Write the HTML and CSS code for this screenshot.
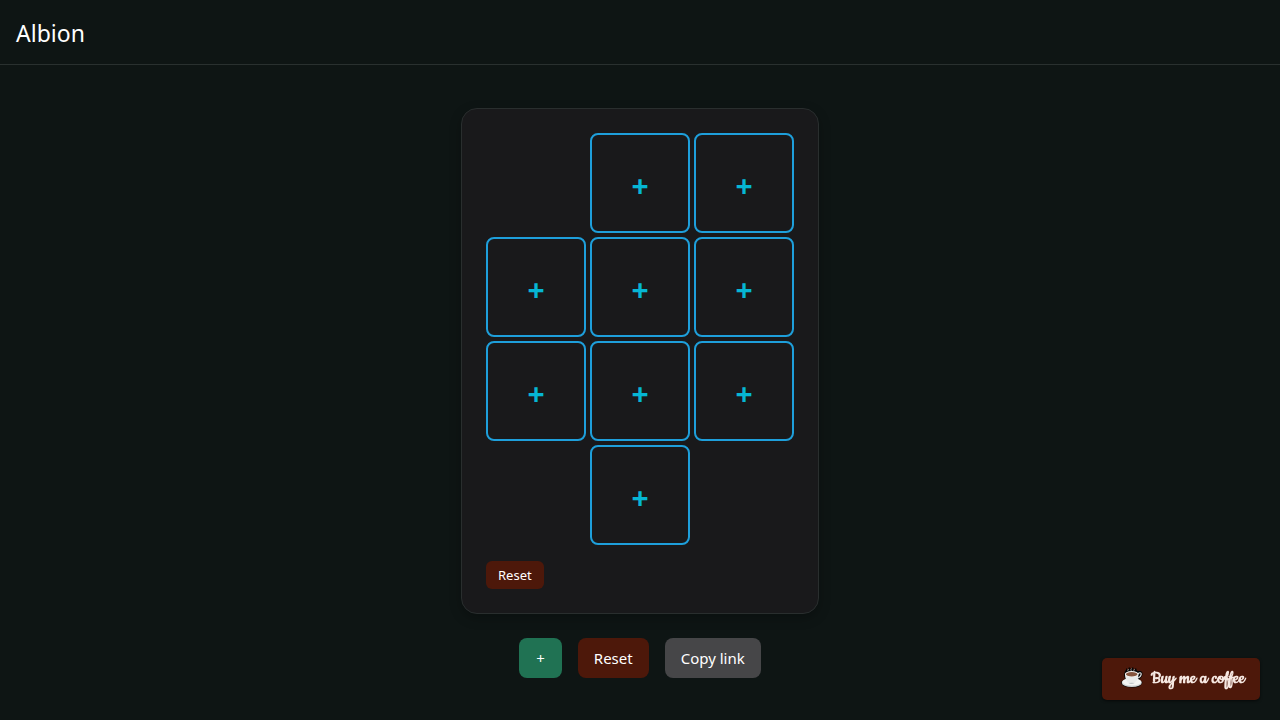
FILE: index.html
```html
<!DOCTYPE html>
<html lang="en">
<head>
    <meta charset="UTF-8">
    <meta name="viewport" content="width=device-width, initial-scale=1.0">
    <title>Albion</title>
    <link rel="stylesheet" href="styles.css">
</head>
<body>
    <header>
        <a class="brand" href="#">Albion</a>
    </header>

    <main>
        <section class="build-card">
            <div class="slots">
                <span></span>
                <button class="slot">+</button>
                <button class="slot">+</button>
                <button class="slot">+</button>
                <button class="slot">+</button>
                <button class="slot">+</button>
                <button class="slot">+</button>
                <button class="slot">+</button>
                <button class="slot">+</button>
                <span></span>
                <button class="slot">+</button>
            </div>
            <button class="btn btn-small btn-red">Reset</button>
        </section>

        <div class="actions">
            <button class="btn btn-green">+</button>
            <button class="btn btn-red">Reset</button>
            <button class="btn btn-gray">Copy link</button>
        </div>
    </main>

    <a class="coffee" href="#">
        <svg width="22" height="22" viewBox="0 0 22 22" aria-hidden="true">
            <path d="M3 8 L4 4 L5 3 L5 1 L7 3 L8 0 L10 2 L12 0 L13 3 L15 1 L16 4 L20 4 Q22 5 21.500 8 Q20 11 18 13 L21.500 15 Q21 20.500 11 20.500 Q0 20 0 15 L4 12 Z" fill="#050404"/>
            <ellipse cx="10.800" cy="15.800" rx="10" ry="4.300" fill="#d2d5d6"/>
            <ellipse cx="10.800" cy="14.800" rx="9.600" ry="3.700" fill="#f4f4f2"/>
            <path d="M16.500 7 Q20 4.500 20.200 7 Q20 10 16 11.500" fill="none" stroke="#eeeeee" stroke-width="1.200"/>
            <path d="M4 7 Q4 13 7.500 16 Q10.500 18 13.500 16 Q17.500 13 17.500 7 Z" fill="#eaebea"/>
            <path d="M7.500 16 Q10.500 18 13.500 16 Q11 15.500 7.500 16" fill="#bfc5c8"/>
            <ellipse cx="10.700" cy="7" rx="6.800" ry="3" fill="#f8f6f3"/>
            <ellipse cx="10.700" cy="7.200" rx="5.800" ry="2.200" fill="#86543d"/>
            <path d="M7.500 4.500 Q6 3.500 7.500 2 M10.500 4 Q9 3 10.500 1.500 M13.500 4.500 Q12 3.500 13.500 2" fill="none" stroke="#b9b4b1" stroke-width=".8"/>
        </svg>
        <span>Buy me a coffee</span>
    </a>
</body>
</html>
```
FILE: styles.css
```css
* {
    box-sizing: border-box;
}

body {
    margin: 0;
    min-height: 100vh;
    display: flex;
    flex-direction: column;
    background-color: #0e1514;
    color: #fff;
    font-family: "Segoe UI", "Noto Sans", sans-serif;
}

header {
    display: flex;
    align-items: center;
    padding: 17px 16px 15px;
    border-bottom: 1px solid #29302f;
}

.brand {
    color: #fff;
    font-size: 23px;
    line-height: 32px;
    text-decoration: none;
}

main {
    flex: 1;
    display: flex;
    flex-direction: column;
    align-items: center;
    justify-content: center;
    gap: 24px;
}

.build-card {
    padding: 24px;
    background-color: #19191b;
    border: 1px solid #292e2e;
    border-radius: 16px;
    box-shadow: 0 4px 12px rgba(0, 0, 0, 0.25);
}

.slots {
    display: grid;
    grid-template-columns: repeat(3, 100px);
    grid-auto-rows: 100px;
    gap: 4px;
    margin-bottom: 16px;
}

.slot {
    padding: 6px 0 0;
    background: transparent;
    border: 2px solid #1e9fdb;
    border-radius: 8px;
    color: #06b6d4;
    font-family: inherit;
    font-size: 30px;
    font-weight: bold;
    line-height: 36px;
    cursor: pointer;
}

.btn {
    display: block;
    height: 40px;
    padding: 0 16px;
    border: none;
    border-radius: 8px;
    color: #fff;
    font-family: inherit;
    font-size: 15px;
    line-height: 24px;
    cursor: pointer;
}

.btn-small {
    height: 28px;
    padding: 0 12px;
    border-radius: 6px;
    font-size: 13px;
    line-height: 20px;
}

.btn-red {
    background-color: #4d180a;
}

.btn-green {
    padding: 0 17px;
    background-color: #207253;
}

.btn-gray {
    background-color: #464648;
}

.actions {
    display: flex;
    gap: 16px;
}

.coffee {
    position: fixed;
    right: 20px;
    bottom: 20px;
    display: flex;
    align-items: center;
    justify-content: center;
    gap: 8px;
    width: 158px;
    height: 42px;
    padding: 0 0 2px 4px;
    background-color: #4d180a;
    border-radius: 5px;
    box-shadow: 0 1px 3px rgba(0, 0, 0, 0.6);
    color: #f6e8e2;
    font-family: Cookie, cursive;
    font-size: 20px;
    font-weight: bold;
    text-decoration: none;
    white-space: nowrap;
}
```
